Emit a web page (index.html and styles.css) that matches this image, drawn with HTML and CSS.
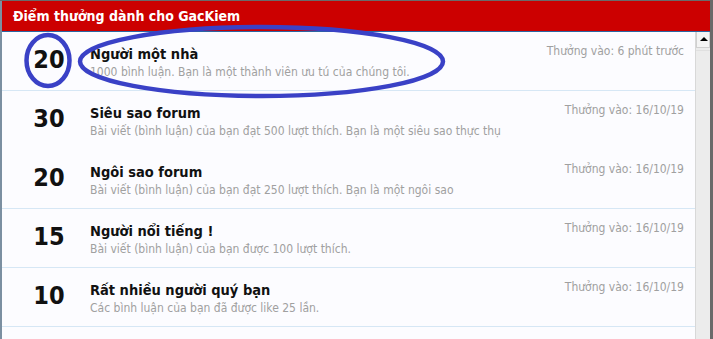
FILE: index.html
```html
<!DOCTYPE html>
<html lang="vi">
<head>
    <meta charset="UTF-8">
    <meta name="viewport" content="width=device-width, initial-scale=1.0">
    <title>Điểm thưởng dành cho GacKiem</title>
    <link rel="stylesheet" href="styles.css">
</head>
<body>
    <div class="overlay">
        <div class="header">Điểm thưởng dành cho GacKiem</div>
        <div class="content">
            <ul class="trophies">
                <li class="trophy">
                    <span class="points">20</span>
                    <div class="info">
                        <h3>Người một nhà</h3>
                        <p>1000 bình luận. Bạn là một thành viên ưu tú của chúng tôi.</p>
                    </div>
                    <span class="awarded">Thưởng vào: 6 phút trước</span>
                </li>
                <li class="trophy no-line">
                    <span class="points">30</span>
                    <div class="info">
                        <h3>Siêu sao forum</h3>
                        <p>Bài viết (bình luận) của bạn đạt 500 lượt thích. Bạn là một siêu sao thực thụ</p>
                    </div>
                    <span class="awarded">Thưởng vào: 16/10/19</span>
                </li>
                <li class="trophy">
                    <span class="points">20</span>
                    <div class="info">
                        <h3>Ngôi sao forum</h3>
                        <p>Bài viết (bình luận) của bạn đạt 250 lượt thích. Bạn là một ngôi sao</p>
                    </div>
                    <span class="awarded">Thưởng vào: 16/10/19</span>
                </li>
                <li class="trophy">
                    <span class="points">15</span>
                    <div class="info">
                        <h3>Người nổi tiếng !</h3>
                        <p>Bài viết (bình luận) của bạn được 100 lượt thích.</p>
                    </div>
                    <span class="awarded">Thưởng vào: 16/10/19</span>
                </li>
                <li class="trophy">
                    <span class="points">10</span>
                    <div class="info">
                        <h3>Rất nhiều người quý bạn</h3>
                        <p>Các bình luận của bạn đã được like 25 lần.</p>
                    </div>
                    <span class="awarded">Thưởng vào: 16/10/19</span>
                </li>
            </ul>
            <div class="scrollbar">
                <div class="scroll-up"></div>
                <div class="scroll-track"></div>
            </div>
        </div>
    </div>

    <!-- vòng đánh dấu -->
    <svg class="marks" width="713" height="339" viewBox="0 0 713 339">
        <ellipse cx="48" cy="60.5" rx="21.5" ry="25.5" fill="none" stroke="#3a41c6" stroke-width="4.5"/>
        <ellipse cx="261.5" cy="61.5" rx="181.5" ry="34.5" fill="none" stroke="#3a41c6" stroke-width="4.5"/>
    </svg>
</body>
</html>
```

FILE: styles.css
```css
body {
    margin: 0;
    background-color: #6a6a6a;
    font-family: "DejaVu Sans Condensed", "DejaVu Sans", sans-serif;
    height: 339px;
    overflow: hidden;
    position: relative;
}
.overlay {
    margin: 1px 3px 0 0;
    height: 338px;
    border-left: 2px solid #7b8fa1;
    display: flex;
    flex-direction: column;
}
.header {
    height: 30px;
    line-height: 30px;
    background-color: #cc0000;
    border-bottom: 1px solid #2b66a3;
    color: white;
    font-weight: bold;
    font-size: 14px;
    padding-left: 11px;
}
.content {
    flex: 1;
    display: flex;
    background-color: #fcfcff;
    overflow: hidden;
}
.trophies {
    flex: 1;
    list-style: none;
    margin: 0;
    padding: 0;
}
.trophy {
    height: 58px;
    border-bottom: 1px solid #d6e7f5;
    display: grid;
    grid-template-columns: 78px 1fr auto;
    align-items: start;
    padding-left: 8px;
    padding-right: 11px;
}
.trophy.no-line {
    border-bottom-color: transparent;
}
.points {
    font-weight: bold;
    font-size: 25px;
    line-height: 30px;
    margin-top: 13px;
    text-align: center;
    color: #111;
}
.info {
    padding-left: 2px;
    margin-top: 14px;
    min-width: 0;
}
.info h3 {
    margin: 0;
    font-size: 14.5px;
    line-height: 17px;
    color: #111;
    white-space: nowrap;
}
.info p {
    margin: 2px 0 0;
    font-size: 12px;
    line-height: 15px;
    color: #a0a0a0;
    white-space: nowrap;
}
.awarded {
    margin-top: 12px;
    font-size: 12px;
    line-height: 15px;
    color: #a0a0a0;
    white-space: nowrap;
}
.scrollbar {
    width: 14px;
    display: flex;
    flex-direction: column;
    background-color: #ececec;
    border-left: 1px solid #d8d8d8;
}
.scroll-up {
    height: 15px;
    border: 1px solid #d0d0d0;
    border-top: none;
    background-color: #f4f4f4;
    position: relative;
}
.scroll-up::after {
    content: "";
    position: absolute;
    left: 3px;
    top: 5px;
    border-left: 4px solid transparent;
    border-right: 4px solid transparent;
    border-bottom: 4px solid #000;
}
.scroll-track {
    flex: 1;
    margin-top: 2px;
    border-top: 1px solid #e0e0e0;
}
.marks {
    position: absolute;
    left: 0;
    top: 0;
    pointer-events: none;
}
```
